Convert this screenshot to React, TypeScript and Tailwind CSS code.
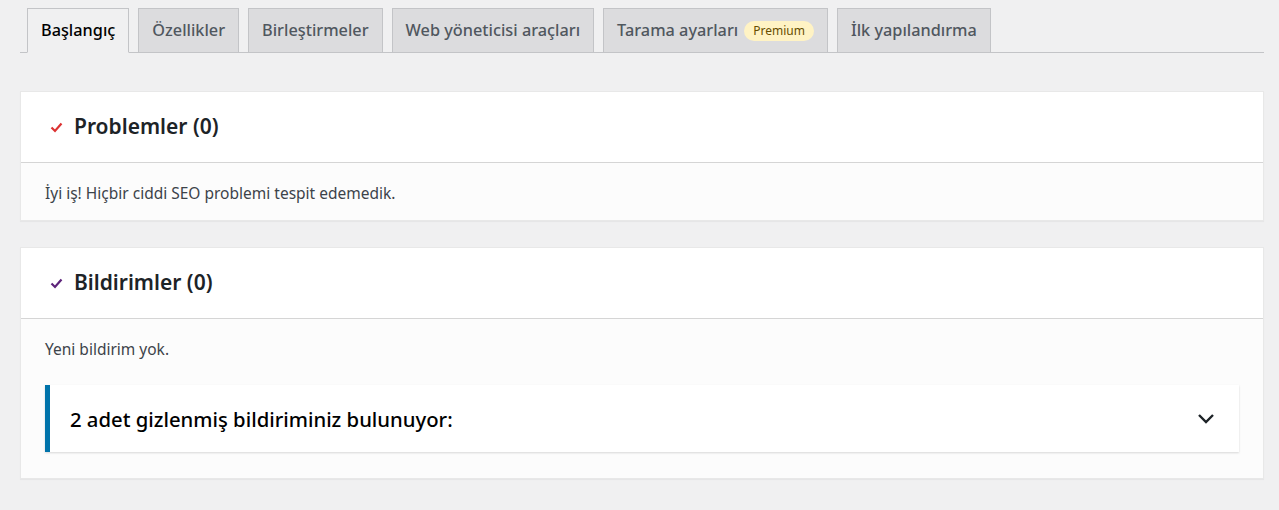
import React from 'react';

const tabs = [
  { label: 'Başlangıç', active: true },
  { label: 'Özellikler' },
  { label: 'Birleştirmeler' },
  { label: 'Web yöneticisi araçları' },
  { label: 'Tarama ayarları', premium: true },
  { label: 'İlk yapılandırma' },
];

const Check = ({ color }: { color: string }) => (
  <svg width="13" height="11" viewBox="0 0 13 11" className="shrink-0">
    <path d="M1.5 5.5 L5 9 L11.5 1.5" fill="none" stroke={color} strokeWidth="2.2" />
  </svg>
);

const Card = ({ title, color, children }: { title: string; color: string; children: React.ReactNode }) => (
  <div className="bg-[#fcfcfc] shadow-[0_1px_1px_rgba(0,0,0,0.04)] border border-[#e8e8e8]">
    <div className="h-[71px] flex items-center gap-[11px] pl-[29px] bg-white border-b border-[#d5d5d5]">
      <Check color={color} />
      <h2 className="text-[21px] font-semibold text-[#1d2327]">{title}</h2>
    </div>
    <div className="px-[24px] pt-[20px] pb-[17px] text-[15.5px] leading-[20px] text-[#3c434a]">{children}</div>
  </div>
);

export default function App() {
  return (
    <div
      className="min-h-[510px] bg-[#f0f0f1] pl-[20px] pr-[15px] pt-[8px]"
      style={{ fontFamily: '"Noto Sans", "Open Sans", sans-serif' }}
    >
      <nav className="flex items-end gap-[9px] pl-[7px] border-b border-[#c3c4c7]">
        {tabs.map((t) => (
          <div
            key={t.label}
            className={
              t.active
                ? 'h-[45px] -mb-px flex items-center px-[13px] border border-[#c3c4c7] border-b-[#f0f0f1] bg-[#f0f0f1] text-[16.3px] font-medium text-black'
                : 'h-[44px] flex items-center gap-[6px] px-[13px] border border-b-0 border-[#c3c4c7] bg-[#dcdcde] text-[16.3px] font-medium text-[#50575e]'
            }
          >
            {t.label}
            {t.premium && (
              <span className="rounded-full bg-[#fff3c4] px-[9px] py-[1px] text-[12px] font-normal text-[#674e00]">
                Premium
              </span>
            )}
          </div>
        ))}
      </nav>

      <div className="mt-[38px] flex flex-col gap-[26px]">
        <Card title="Problemler (0)" color="#dc3232">
          <p>İyi iş! Hiçbir ciddi SEO problemi tespit edemedik.</p>
        </Card>
        <Card title="Bildirimler (0)" color="#5d237a">
          <p>Yeni bildirim yok.</p>
          <div className="mt-[26px] mb-[9px] h-[67px] flex items-center justify-between bg-white border-l-[5px] border-[#0073aa] shadow-[0_1px_2px_rgba(0,0,0,0.15)] pl-[20px] pr-[24px]">
            <span className="text-[20.3px] font-medium text-black">2 adet gizlenmiş bildiriminiz bulunuyor:</span>
            <svg width="18" height="11" viewBox="0 0 18 11">
              <path d="M2 2 L9 9 L16 2" fill="none" stroke="#1d2327" strokeWidth="2.4" />
            </svg>
          </div>
        </Card>
      </div>
    </div>
  );
}
